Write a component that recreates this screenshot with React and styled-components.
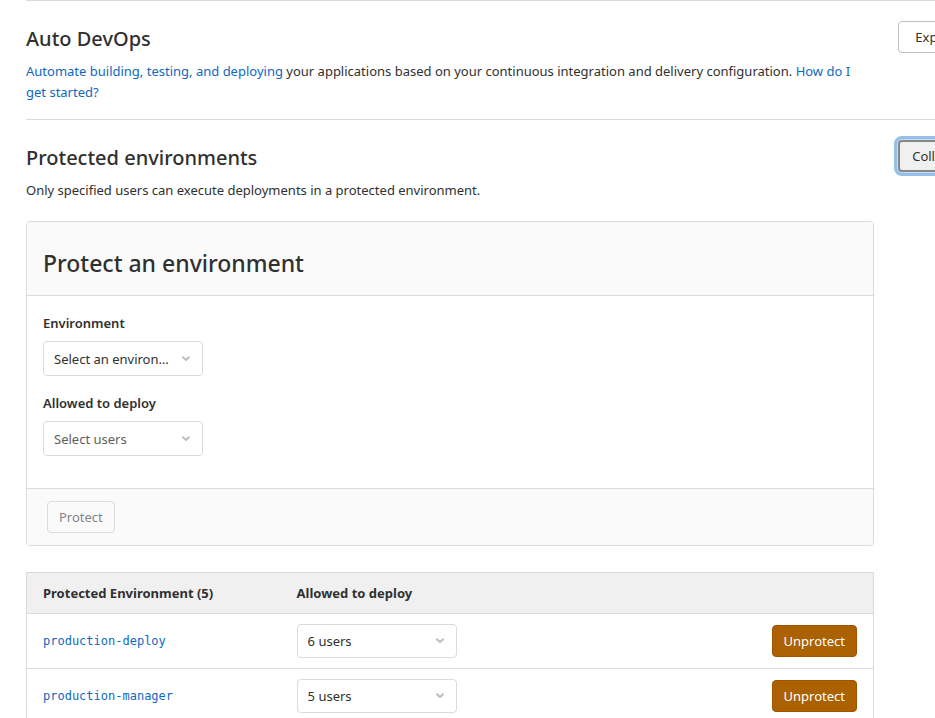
import React, { useId } from "react";
import styled, { createGlobalStyle, css } from "styled-components";

const GlobalStyle = createGlobalStyle`
  *, *::before, *::after { box-sizing: border-box; }
  html { overflow-x: clip; }
  body {
    margin: 0;
    background: #fff;
    color: #303030;
    font-family: "Noto Sans", "Open Sans", sans-serif;
    font-size: 13px;
    line-height: 21px;
    overflow-x: clip;
  }
  button, select { font: inherit; color: inherit; }
`;

const Page = styled.main`
  padding-left: 26px;
`;

const SettingsSection = styled.section`
  display: grid;
  grid-template-columns: minmax(0, 1fr) 37px;
  column-gap: 24px;
  padding: 20px 0 16px;
  border-top: 1px solid #dbdbdb;
`;

const SectionTitle = styled.h2`
  margin: 5px 0 10px;
  font-size: 20px;
  line-height: 25px;
  font-weight: 500;
`;

const Description = styled.p`
  margin: 0;
  padding-right: 12px;
`;

const TextLink = styled.a`
  color: #1068bf;
  text-decoration: none;
  &:hover { text-decoration: underline; }
`;

const CodeLink = styled(TextLink)`
  font-family: "DejaVu Sans Mono", monospace;
  font-size: 12px;
`;

const Button = styled.button`
  height: 32px;
  padding: 0 11px;
  border: 1px solid #bfbfbf;
  border-radius: 4px;
  background: #fff;
  line-height: 20px;
  cursor: pointer;

  ${({ $variant }) => $variant === "warning" && css`
    border-color: #a35200;
    background: #ab6100;
    color: #fff;
  `}
  &:disabled {
    border-color: #dbdbdb;
    background: #fafafa;
    color: #868686;
    cursor: default;
  }
`;

const ToggleButton = styled(Button)`
  width: 80px;
  ${({ $active }) => $active && css`
    border: 2px solid #868686;
    background: #f0f0f0;
    box-shadow: 0 0 0 1px #c5dcf4, 0 0 0 4px #95bee8;
  `}
`;

const Card = styled.form`
  margin: 20px 0 26px;
  border: 1px solid #dbdbdb;
  border-radius: 4px;
`;

const CardHeader = styled.header`
  padding: 25px 16px 15px;
  border-bottom: 1px solid #dbdbdb;
  border-radius: 3px 3px 0 0;
  background: #fafafa;
`;

const CardTitle = styled.h3`
  margin: 0;
  font-size: 23px;
  line-height: 33px;
  font-weight: 500;
`;

const CardBody = styled.div`
  display: flex;
  flex-direction: column;
  gap: 17px;
  padding: 17px 16px 32px;
`;

const CardFooter = styled.footer`
  padding: 12px 20px;
  border-top: 1px solid #dbdbdb;
  border-radius: 0 0 3px 3px;
  background: #fafafa;
`;

const Field = styled.div`
  display: flex;
  flex-direction: column;
  gap: 7px;
`;

const FieldLabel = styled.label`
  font-weight: 600;
`;

const SelectFrame = styled.div`
  display: grid;
  width: 160px;
  align-items: center;
  > * { grid-area: 1 / 1; }
`;

const SelectBox = styled.select`
  appearance: none;
  width: 100%;
  height: ${({ $compact }) => ($compact ? 34 : 35)}px;
  padding: ${({ $compact }) => ($compact ? 0 : 2)}px 32px 0 10px;
  border: 1px solid #dbdbdb;
  border-radius: 4px;
  background: #fff;
  color: ${({ $muted }) => ($muted ? "#5e5e5e" : "#303030")};
  text-overflow: ellipsis;
`;

const ChevronIcon = styled.svg`
  justify-self: end;
  margin-right: 12px;
  pointer-events: none;
`;

const EnvironmentTable = styled.table`
  width: 100%;
  border: 1px solid #dbdbdb;
  border-collapse: collapse;
  table-layout: fixed;
`;

const HeadCell = styled.th`
  width: ${({ $width }) => $width || "auto"};
  height: 41px;
  padding: 0 16px;
  background: #f0f0f0;
  text-align: left;
  font-weight: 700;
`;

const Row = styled.tr`
  border-top: 1px solid #dbdbdb;
`;

const Cell = styled.td`
  height: 55px;
  padding: 0 16px;
  text-align: ${({ $align }) => $align || "left"};
`;

function Select({ children, ...rest }) {
  return (
    <SelectFrame>
      <SelectBox {...rest}>{children}</SelectBox>
      <ChevronIcon width="9" height="6" viewBox="0 0 9 6" fill="none" aria-hidden="true">
        <path d="M1 1.2 L4 4 L7 1.2" stroke="#bfbfbf" strokeWidth="2" strokeLinecap="round" strokeLinejoin="round" />
      </ChevronIcon>
    </SelectFrame>
  );
}

function LabelledSelect({ label, option, muted }) {
  const id = useId();
  return (
    <Field>
      <FieldLabel htmlFor={id}>{label}</FieldLabel>
      <Select id={id} $muted={muted}>
        <option>{option}</option>
      </Select>
    </Field>
  );
}

const environments = [
  { name: "production-deploy", users: "6 users" },
  { name: "production-manager", users: "5 users" },
];

export default function App() {
  return (
    <>
      <GlobalStyle />
      <Page>
        <SettingsSection>
          <div>
            <SectionTitle>Auto DevOps</SectionTitle>
            <Description>
              <TextLink href="#auto-devops">Automate building, testing, and deploying</TextLink>{" "}
              your applications based on your continuous integration and delivery configuration.{" "}
              <TextLink href="#get-started">How do I get started?</TextLink>
            </Description>
          </div>
          <ToggleButton type="button" aria-expanded="false">Expand</ToggleButton>
        </SettingsSection>

        <SettingsSection>
          <div>
            <SectionTitle>Protected environments</SectionTitle>
            <Description>Only specified users can execute deployments in a protected environment.</Description>

            <Card>
              <CardHeader>
                <CardTitle>Protect an environment</CardTitle>
              </CardHeader>
              <CardBody>
                <LabelledSelect label="Environment" option="Select an environment" />
                <LabelledSelect label="Allowed to deploy" option="Select users" muted />
              </CardBody>
              <CardFooter>
                <Button type="submit" disabled>Protect</Button>
              </CardFooter>
            </Card>

            <EnvironmentTable>
              <thead>
                <tr>
                  <HeadCell $width="30%">Protected Environment (5)</HeadCell>
                  <HeadCell>Allowed to deploy</HeadCell>
                  <HeadCell $width="20%" aria-label="Actions" />
                </tr>
              </thead>
              <tbody>
                {environments.map(({ name, users }) => (
                  <Row key={name}>
                    <Cell><CodeLink href={`#${name}`}>{name}</CodeLink></Cell>
                    <Cell>
                      <Select $compact aria-label={`Allowed to deploy to ${name}`}>
                        <option>{users}</option>
                      </Select>
                    </Cell>
                    <Cell $align="right">
                      <Button type="button" $variant="warning">Unprotect</Button>
                    </Cell>
                  </Row>
                ))}
              </tbody>
            </EnvironmentTable>
          </div>
          <ToggleButton type="button" $active aria-expanded="true">Collapse</ToggleButton>
        </SettingsSection>
      </Page>
    </>
  );
}
